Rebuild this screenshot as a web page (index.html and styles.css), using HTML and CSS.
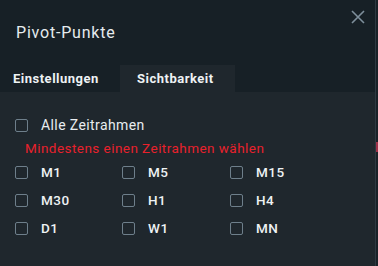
FILE: index.html
```html
<!DOCTYPE html>
<html>
<head>
<meta charset="utf-8">
<link rel="stylesheet" href="styles.css">
</head>
<body>
<div class="page">
  <div class="dialog">
    <div class="header">
      <div class="title">Pivot-Punkte</div>
      <svg class="close" width="14" height="14" viewBox="0 0 14 14"><path d="M1 1L13 13M13 1L1 13" stroke="#7e8f9b" stroke-width="1.6" fill="none"/></svg>
    </div>
    <div class="tabs">
      <div class="tab">Einstellungen</div>
      <div class="tab active">Sichtbarkeit</div>
    </div>
    <div class="body">
      <label class="row all"><span class="box"></span><span class="lbl-all">Alle Zeitrahmen</span></label>
      <div class="error">Mindestens einen Zeitrahmen wählen</div>
      <div class="grid">
        <label class="row"><span class="box"></span><span class="lbl">M1</span></label>
        <label class="row"><span class="box"></span><span class="lbl">M5</span></label>
        <label class="row"><span class="box"></span><span class="lbl">M15</span></label>
        <label class="row"><span class="box"></span><span class="lbl">M30</span></label>
        <label class="row"><span class="box"></span><span class="lbl">H1</span></label>
        <label class="row"><span class="box"></span><span class="lbl">H4</span></label>
        <label class="row"><span class="box"></span><span class="lbl">D1</span></label>
        <label class="row"><span class="box"></span><span class="lbl">W1</span></label>
        <label class="row"><span class="box"></span><span class="lbl">MN</span></label>
      </div>
    </div>
  </div>
  <div class="side">
    <div class="mark"></div>
  </div>
</div>
</body>
</html>
```
FILE: styles.css
```css
html, body {
  margin: 0;
  padding: 0;
  width: 378px;
  height: 266px;
  overflow: hidden;
  background: #1e262c;
  font-family: Roboto, "Liberation Sans", sans-serif;
}
.page {
  display: flex;
  height: 266px;
}
.dialog {
  width: 375px;
  display: flex;
  flex-direction: column;
  background: #1f272d;
}
.header {
  background: #172026;
  height: 65px;
  position: relative;
}
.title {
  padding: 23px 0 0 16px;
  font-size: 16px;
  line-height: 20px;
  color: #e6ebee;
  letter-spacing: 0.8px;
}
.close {
  position: absolute;
  left: 351px;
  top: 10px;
}
.tabs {
  display: flex;
  height: 27px;
  background: #172026;
}
.tab {
  font-size: 13px;
  font-weight: bold;
  color: #eef2f4;
  letter-spacing: 0.5px;
  line-height: 27px;
  padding: 0 0 0 13px;
  width: 120px;
  box-sizing: border-box;
}
.tab.active {
  background: #1f272d;
  width: 115px;
  padding-left: 17px;
}
.body {
  padding: 26px 0 0 15px;
}
.row {
  display: flex;
  align-items: center;
  height: 14px;
}
.box {
  width: 11px;
  height: 11px;
  border: 1.3px solid #6e7f8b;
  border-radius: 2px;
  box-sizing: content-box;
  flex: none;
}
.lbl-all {
  margin-left: 13px;
  font-size: 14px;
  color: #e8edf0;
  letter-spacing: 0.4px;
}
.error {
  margin: 9px 0 0 10px;
  font-size: 13.5px;
  color: #e8212c;
  letter-spacing: 0.45px;
  line-height: 15px;
}
.grid {
  margin-top: 9px;
  display: grid;
  grid-template-columns: 107px 108px 100px;
  row-gap: 14px;
}
.lbl {
  margin-left: 13px;
  font-size: 13.5px;
  font-weight: 500;
  color: #eef2f4;
  letter-spacing: 0.5px;
}
.side {
  flex: 1;
  border-left: 1px solid #2e3a42;
  background: #1a2228;
  position: relative;
}
.mark {
  position: absolute;
  top: 142px;
  left: 0;
  width: 2px;
  height: 10px;
  background: #a0324a;
}
```
